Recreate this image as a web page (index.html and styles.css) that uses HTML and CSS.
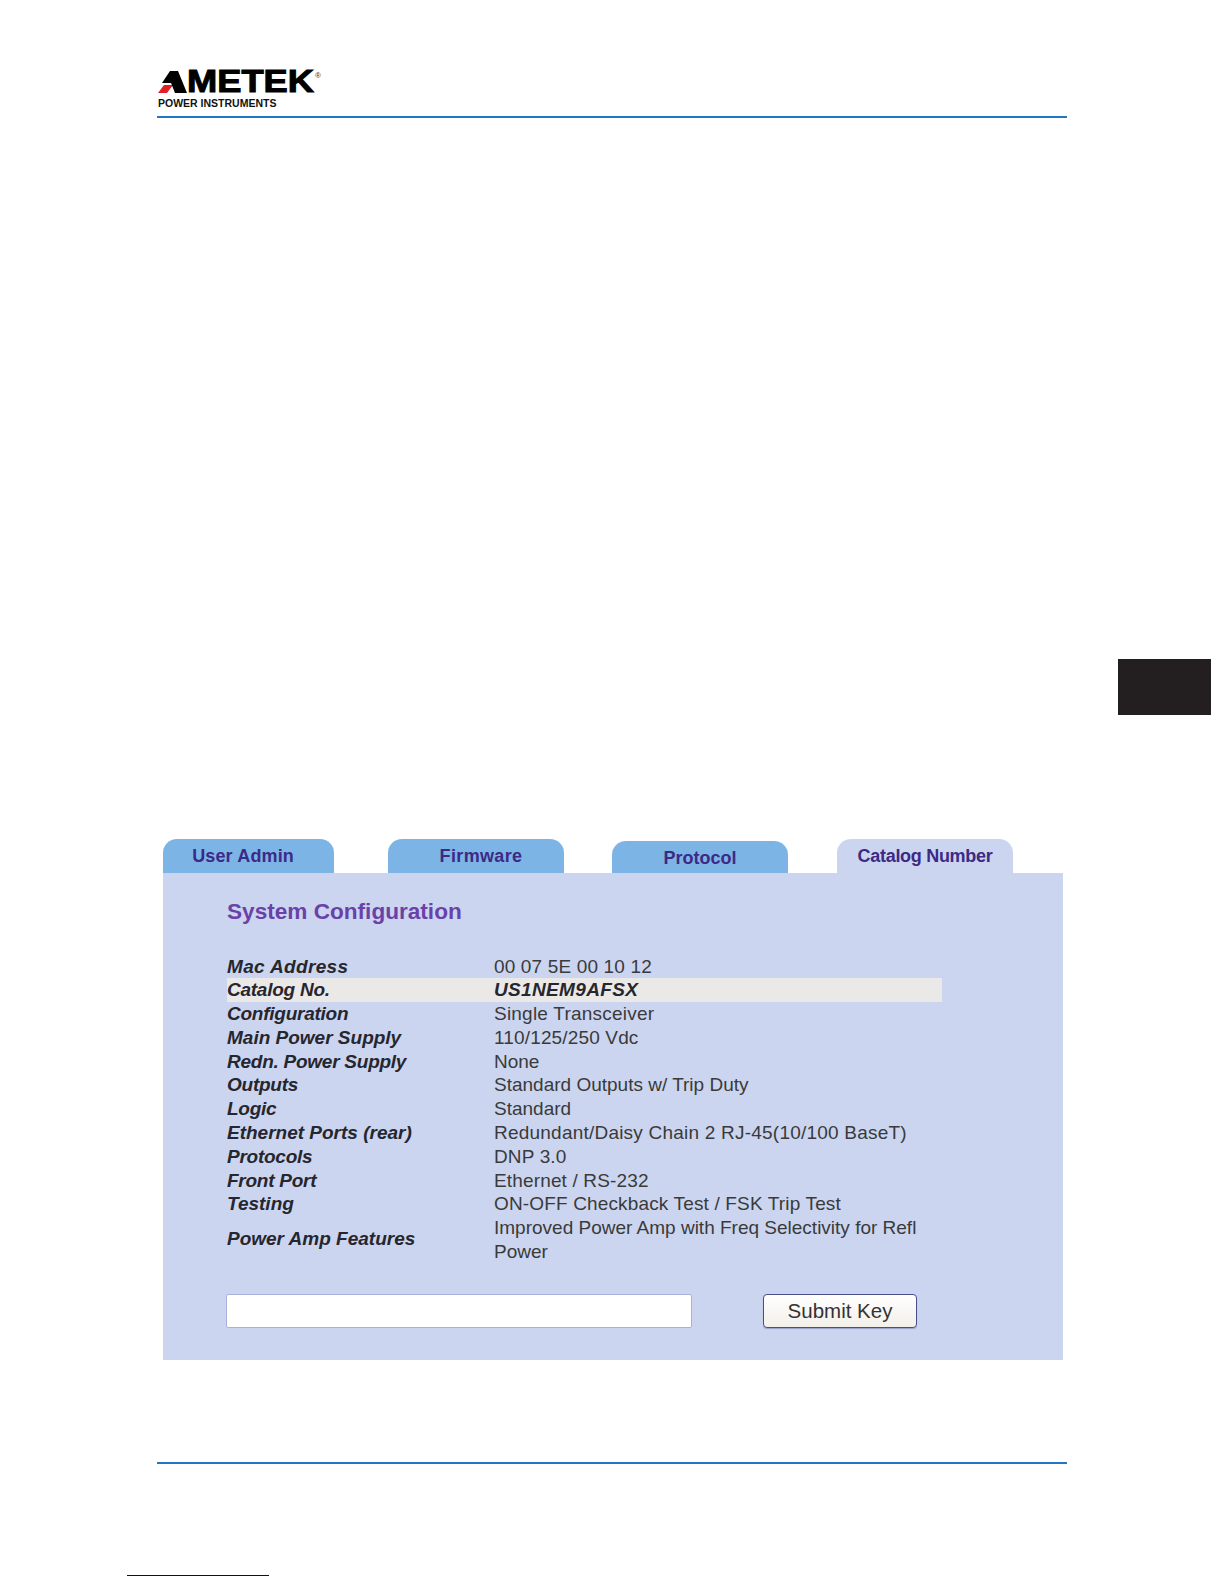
FILE: index.html
```html
<!DOCTYPE html>
<html lang="en">
<head>
<meta charset="utf-8">
<title>System Configuration</title>
<link rel="stylesheet" href="styles.css">
</head>
<body>
<div class="page">
  <header class="head">
    <div class="logo">
      <div class="logo-top">
        <svg class="logo-a" viewBox="0 0 29 22" aria-hidden="true">
          <polygon points="0,22 6,14 15,14 9,22" fill="#e01f26"/>
          <polygon points="12,0 20,0 29,22 17,22 13,12 4,12" fill="#000"/>
        </svg>
        <span class="logo-word">METEK</span><span class="logo-reg">®</span>
      </div>
      <div class="logo-sub">POWER INSTRUMENTS</div>
    </div>
  </header>
  <main class="shot">
    <nav class="tabs">
      <div class="tab tab-user">User Admin</div>
      <div class="tab tab-firm">Firmware</div>
      <div class="tab tab-proto">Protocol</div>
      <div class="tab tab-cat">Catalog Number</div>
    </nav>
    <section class="panel">
      <h1 class="title">System Configuration</h1>
      <div class="rows">
        <div class="row"><b class="wider">Mac Address</b><span class="wide">00 07 5E 00 10 12</span></div>
        <div class="row row-hi"><b class="tight">Catalog No.</b><b class="wider">US1NEM9AFSX</b></div>
        <div class="row"><b class="tight">Configuration</b><span class="mid">Single Transceiver</span></div>
        <div class="row"><b>Main Power Supply</b><span class="wide">110/125/250 Vdc</span></div>
        <div class="row"><b class="tight">Redn. Power Supply</b><span>None</span></div>
        <div class="row"><b class="tight">Outputs</b><span>Standard Outputs w/ Trip Duty</span></div>
        <div class="row"><b class="tight">Logic</b><span>Standard</span></div>
        <div class="row"><b>Ethernet Ports (rear)</b><span class="mid">Redundant/Daisy Chain 2 RJ-45(10/100 BaseT)</span></div>
        <div class="row"><b class="tight">Protocols</b><span class="wide">DNP 3.0</span></div>
        <div class="row"><b class="tight">Front Port</b><span class="wide">Ethernet / RS-232</span></div>
        <div class="row"><b>Testing</b><span class="wide">ON-OFF Checkback Test / FSK Trip Test</span></div>
        <div class="row row-wrap"><b>Power Amp Features</b><span>Improved Power Amp with Freq Selectivity for Refl Power</span></div>
      </div>
      <form class="key">
        <input class="key-input" type="text" aria-label="Key">
        <button class="key-btn" type="button">Submit Key</button>
      </form>
    </section>
  </main>
  <footer class="foot"></footer>
  <div class="note-rule"></div>
</div>
<div class="side-tab"></div>
</body>
</html>
```
FILE: styles.css
```css
* { box-sizing: border-box; }
html, body { margin: 0; padding: 0; background: #fff; }
body { font-family: "Liberation Sans", Arial, sans-serif; position: relative; height: 1584px; overflow: hidden; }
.page { padding: 71px 0 0 157px; width: 1067px; }
.head { border-bottom: 2px solid #1f78c1; height: 47px; }
.logo { width: 180px; }
.logo-top { display: flex; align-items: flex-start; height: 22px; margin-left: 1px; }
.logo-a { width: 29px; height: 22px; display: block; flex: none; }
.logo-word { font-weight: 700; font-size: 31px; line-height: 22px; color: #000; -webkit-text-stroke: 1px #000; display: inline-block; transform: scaleX(1.17); transform-origin: left; height: 22px; width: 128px; flex: none; }
.logo-reg { font-size: 8px; line-height: 9px; color: #333; }
.logo-sub { font-weight: 700; font-size: 10.5px; line-height: 11px; margin: 5px 0 0 1px; color: #111; white-space: nowrap; }
.shot { margin: 720.5px 0 0 6px; width: 900px; }
.tabs { display: flex; align-items: flex-end; height: 34.5px; }
.tab { height: 34.5px; border-radius: 14px 14px 0 0; background: #7cb5e5; color: #3c2a86; font-weight: 700; font-size: 18px; text-align: center; line-height: 35px; width: 176px; }
.tab-user { width: 171px; padding-right: 40px; text-align: right; margin-right: 54px; letter-spacing: 0.15px; }
.tab-firm { margin-right: 48px; letter-spacing: 0.35px; padding-left: 10px; }
.tab-proto { height: 32px; margin-right: 49px; line-height: 34px; }
.tab-cat { background: #cbd5f0; letter-spacing: -0.3px; }
.panel { background: #cbd5f0; height: 487px; padding: 24px 0 0 64px; }
.title { margin: 0; font-size: 22.6px; line-height: 30px; font-weight: 700; color: #6a41a8; }
.rows { margin-top: 27.5px; width: 715px; }
.row { display: grid; grid-template-columns: 267px 1fr; align-items: center; min-height: 23.8px; font-size: 19px; line-height: 23.8px; color: #3a3a3a; padding-right: 16px; }
.row b { font-style: italic; color: #26262e; }
.row-hi { background: #ebe9e8; }
.row-wrap b { padding-bottom: 3px; }
.row .wide { letter-spacing: 0.15px; }
.row .mid { letter-spacing: 0.22px; }
.row .wider { letter-spacing: 0.35px; }
.row .tight { letter-spacing: -0.25px; }
.key { display: flex; align-items: stretch; margin: 30.5px 0 0 -1px; height: 34px; }
.key-input { width: 466px; height: 34px; border: 1px solid #aab0dc; border-radius: 2px; background: #fff; padding: 0; }
.key-btn { width: 154px; height: 34px; margin-left: 71px; background: linear-gradient(#fff, #f3f0ea); border: 1px solid #4a4f8c; border-radius: 4px; box-shadow: 0 1px 1px #9aa0c8; font: 20.5px "Liberation Sans", Arial, sans-serif; color: #333; padding: 0; }
.foot { margin-top: 102px; border-top: 2px solid #1f78c1; height: 2px; width: 910px; }
.note-rule { width: 142px; height: 1px; background: #00009a; margin: 111px 0 0 -30px; }
.side-tab { position: absolute; left: 1118px; top: 659px; width: 93px; height: 56px; background: #231f20; }
```
